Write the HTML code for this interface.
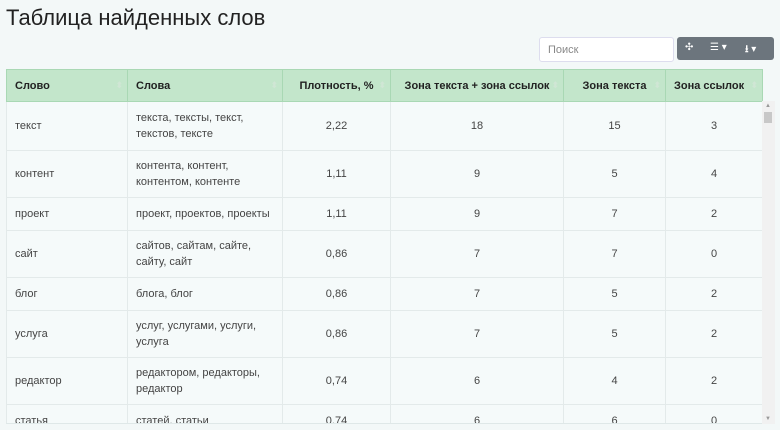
<!DOCTYPE html><html><head><meta charset="utf-8"><style>
*{margin:0;padding:0;box-sizing:border-box}
body{width:780px;height:430px;background:#f3f8f8;font-family:"Liberation Sans","DejaVu Sans",sans-serif;color:#333;position:relative;overflow:hidden}
h1{position:absolute;left:6px;top:5px;font-size:22px;font-weight:normal;color:#222}
.search{position:absolute;left:539px;top:37px;width:135px;height:25px;background:#fff;border:1px solid #dde;border-radius:3px;font-size:11px;color:#888;padding:6px 8px}
.btns{position:absolute;left:677px;top:37px;width:97px;height:23px;background:#6c757d;border-radius:3px;color:#fff;font-size:10px;font-weight:bold}
.btns span{position:absolute;top:5px}
.wrap{position:absolute;left:6px;top:69px;width:769px;height:355px;overflow:hidden;border-bottom:1px solid #dfe8e8}
table{border-collapse:collapse;width:756px;table-layout:fixed;font-size:11px}
th{background:#c3e6cb;height:32px;border:1px solid #a9d8b4;text-align:left;padding:0 8px;font-size:11px;color:#222;position:relative}
th.c{text-align:center}
th:after{content:"⬍";position:absolute;right:4px;top:10px;color:#d0e6d5;font-size:9px}
td{border:1px solid #e3eaea;padding:0 8px;vertical-align:middle;color:#444;line-height:16px;background:#f5fafa}
td.c{text-align:center}
.sb{position:absolute;left:762px;top:101px;width:13px;height:323px;background:#f1f1f1}
.sb i{position:absolute;left:2px;top:11px;width:8px;height:11px;background:#c8c8c8}
.sb b{position:absolute;left:3px;font-size:6px;color:#999;font-weight:normal}
</style></head><body>
<h1>Таблица найденных слов</h1>
<div class="search">Поиск</div>
<div class="btns"><span style="left:8px">✣</span><span style="left:33px">☰ ▾</span><span style="left:68px">⭳ ▾</span></div>
<div class="wrap"><table>
<colgroup><col style="width:121px"><col style="width:155px"><col style="width:108px"><col style="width:173px"><col style="width:102px"><col style="width:97px"></colgroup>
<tr><th>Слово</th><th>Слова</th><th class="c">Плотность, %</th><th class="c">Зона текста + зона ссылок</th><th class="c">Зона текста</th><th>Зона ссылок</th></tr>
<tr style="height:49px"><td>текст</td><td>текста, тексты, текст, текстов, тексте</td><td class="c">2,22</td><td class="c">18</td><td class="c">15</td><td class="c">3</td></tr>
<tr style="height:47px"><td>контент</td><td>контента, контент, контентом, контенте</td><td class="c">1,11</td><td class="c">9</td><td class="c">5</td><td class="c">4</td></tr>
<tr style="height:33px"><td>проект</td><td>проект, проектов, проекты</td><td class="c">1,11</td><td class="c">9</td><td class="c">7</td><td class="c">2</td></tr>
<tr style="height:47px"><td>сайт</td><td>сайтов, сайтам, сайте, сайту, сайт</td><td class="c">0,86</td><td class="c">7</td><td class="c">7</td><td class="c">0</td></tr>
<tr style="height:33px"><td>блог</td><td>блога, блог</td><td class="c">0,86</td><td class="c">7</td><td class="c">5</td><td class="c">2</td></tr>
<tr style="height:47px"><td>услуга</td><td>услуг, услугами, услуги, услуга</td><td class="c">0,86</td><td class="c">7</td><td class="c">5</td><td class="c">2</td></tr>
<tr style="height:47px"><td>редактор</td><td>редактором, редакторы, редактор</td><td class="c">0,74</td><td class="c">6</td><td class="c">4</td><td class="c">2</td></tr>
<tr style="height:33px"><td>статья</td><td>статей, статьи</td><td class="c">0,74</td><td class="c">6</td><td class="c">6</td><td class="c">0</td></tr>
</table></div>
<div class="sb"><b style="top:2px">▲</b><i></i><b style="bottom:2px">▼</b></div>
</body></html>
